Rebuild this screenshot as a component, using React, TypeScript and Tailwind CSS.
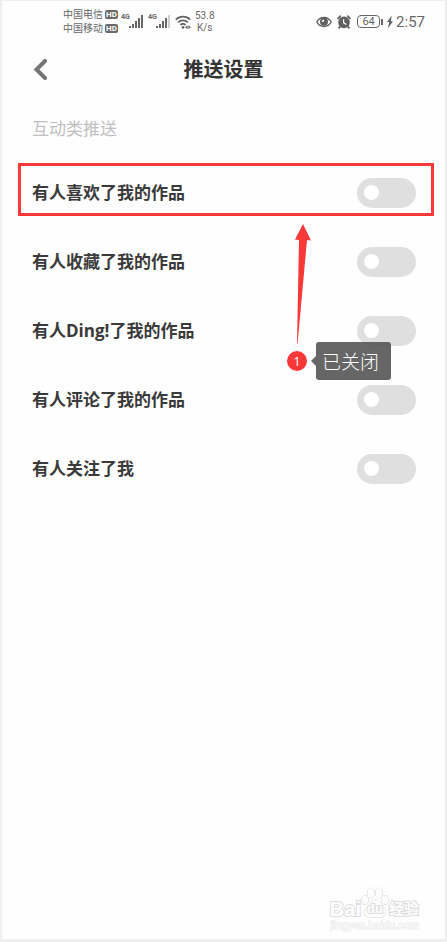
import { useState } from "react";

type PushSetting = {
  id: string;
  label: string;
};

const SETTINGS: PushSetting[] = [
  { id: "liked", label: "有人喜欢了我的作品" },
  { id: "collected", label: "有人收藏了我的作品" },
  { id: "ding", label: "有人Ding!了我的作品" },
  { id: "commented", label: "有人评论了我的作品" },
  { id: "followed", label: "有人关注了我" },
];

function Carrier({ name }: { name: string }) {
  return (
    <div className="flex items-center gap-0.5">
      <span>{name}</span>
      <span className="flex h-[9px] w-[13px] items-center justify-center rounded-xs bg-[#6a6a6a] text-[8px] leading-none font-bold text-white">
        HD
      </span>
    </div>
  );
}

function Signal({ full }: { full: boolean }) {
  return (
    <div className="flex">
      <span className="w-2 text-[7px] leading-1 font-bold">4G</span>
      <svg className="h-3.5 w-4" viewBox="0 0 16 14" fill="#666666" aria-hidden="true">
        <rect x="0" y="11" width="2" height="2" />
        <rect x="3" y="9" width="2" height="4" />
        <rect x="6" y="6" width="2" height="7" />
        <rect x="9" y="3" width="2" height="10" />
        <rect x="12" y="0" width="2" height="13" opacity={full ? 1 : 0.3} />
      </svg>
    </div>
  );
}

function WifiIcon() {
  return (
    <svg className="h-3.5 w-4" viewBox="0 0 16 14" fill="none" stroke="#666666" strokeWidth="1.8" aria-hidden="true">
      <path d="M0.8 4.6a10.2 10.2 0 0 1 14.4 0" />
      <path d="M3.1 7.4a7 7 0 0 1 9.8 0" />
      <path d="M5.4 10a3.8 3.8 0 0 1 5.2 0" />
      <circle cx="8" cy="12.4" r="1.4" fill="#666666" stroke="none" />
      <path d="M10 12.2l2.6-2v4zM16 12.2l-2.6-2v4z" fill="#666666" stroke="none" />
    </svg>
  );
}

function EyeIcon() {
  return (
    <svg className="h-3 w-4" viewBox="0 0 16 12" fill="none" aria-hidden="true">
      <path d="M0.8 6C4 0 12 0 15.2 6 12 12 4 12 0.8 6Z" stroke="#5f5f5f" strokeWidth="1.4" />
      <circle cx="8" cy="5.8" r="4" fill="#5f5f5f" />
      <path d="M8 3.6a2.2 2.2 0 0 0-2.2 2.2H8Z" fill="#ffffff" />
    </svg>
  );
}

function AlarmIcon() {
  return (
    <svg className="h-3.5 w-3.5" viewBox="0 0 14 14" fill="none" aria-hidden="true">
      <circle cx="7" cy="7.4" r="5.8" fill="#5f5f5f" />
      <path d="M0.6 3.8 3.8 0.7M13.4 3.8 10.2 0.7M3.2 11.6 1.5 13.4M10.8 11.6l1.7 1.8" stroke="#5f5f5f" strokeWidth="1.8" />
      <path d="M6.6 4.2v3.6l2.8 1.6" stroke="#ffffff" strokeWidth="1.2" />
    </svg>
  );
}

function StatusBar() {
  return (
    <div className="flex h-[41px] items-center justify-between pr-5 pl-[61px] text-[#666666]">
      <div className="flex items-center">
        <div className="w-[58px] text-[10px] leading-[14px]">
          <Carrier name="中国电信" />
          <Carrier name="中国移动" />
        </div>
        <div className="flex gap-[3px]">
          <Signal full />
          <Signal full={false} />
        </div>
        <div className="ml-[3px]">
          <WifiIcon />
        </div>
        <div className="ml-1 text-center text-[10px] leading-3">
          <div>53.8</div>
          <div>K/s</div>
        </div>
      </div>
      <div className="flex items-center">
        <EyeIcon />
        <span className="ml-[5px]">
          <AlarmIcon />
        </span>
        <span className="ml-1.5 flex h-[13px] w-[23px] items-center justify-center rounded border border-[#666666] text-[11px] leading-none">
          64
        </span>
        <span className="ml-px h-1.5 w-0.5 bg-[#666666]" />
        <svg className="ml-1 h-3.5 w-1.5" viewBox="0 0 6 14" fill="#5f5f5f" aria-hidden="true">
          <path d="M4.8 0.5 0 7h2.2L0.8 13.5 6 6.2H3.8Z" />
        </svg>
        <span className="ml-[3px] text-[15px] leading-5">2:57</span>
      </div>
    </div>
  );
}

function Header() {
  return (
    <header className="flex h-14 items-center justify-between px-[30px]">
      <button type="button" aria-label="返回" className="flex h-8 w-6 items-center">
        <svg className="h-[22px] w-[19px]" viewBox="0 0 19 22" fill="none" aria-hidden="true">
          <path d="M13 2 4.5 10.5l8.5 8.5" stroke="#757575" strokeWidth="4" strokeLinecap="round" />
        </svg>
      </button>
      <h1 className="text-[20px] leading-7 font-bold text-[#333333]">推送设置</h1>
      <span className="w-6" />
    </header>
  );
}

function Callout() {
  return (
    <>
      <div className="pointer-events-none absolute top-[5px] right-[11px] left-4 h-[53px] border-3 border-[#fb3838]" />
      <svg
        className="pointer-events-none absolute top-[66px] right-[134px] h-[120px] w-4"
        viewBox="0 0 16 120"
        fill="#fb3838"
        aria-hidden="true"
      >
        <path d="M8 0 16 16.5 12 16 2.6 119.5H2L4 16 0 15.5Z" />
      </svg>
      <div className="pointer-events-none absolute top-[184px] right-[54px] z-10 flex items-center">
        <span className="flex h-5 w-5 items-center justify-center rounded-full bg-[#fb3838] font-['Open_Sans',sans-serif] text-[13px] leading-none text-white">
          1
        </span>
        <svg className="ml-1 h-2.5 w-[5px]" viewBox="0 0 5 10" fill="#666666" aria-hidden="true">
          <path d="M5 0v10L0 5Z" />
        </svg>
        <span className="rounded-[3px] bg-[#555555]/90 py-[5px] pr-3 pl-1.5 font-['Noto_Sans_CJK_SC',sans-serif] text-[19px] leading-7 font-light text-white">
          已关闭
        </span>
      </div>
    </>
  );
}

function SettingRow({ setting, highlighted }: { setting: PushSetting; highlighted: boolean }) {
  const [enabled, setEnabled] = useState(false);

  return (
    <li className="relative flex h-[69px] items-center justify-between pr-[29px] pl-[30px]">
      <label
        htmlFor={setting.id}
        className="font-['Open_Sans','Noto_Sans_CJK_SC',sans-serif] text-[17px] leading-6 font-bold text-[#3a3a3a]"
      >
        {setting.label}
      </label>
      <input
        id={setting.id}
        type="checkbox"
        role="switch"
        checked={enabled}
        onChange={(event) => setEnabled(event.target.checked)}
        className="flex h-[30px] w-[59px] appearance-none items-center rounded-full bg-[#dfdfdf] px-[7px] before:h-[15px] before:w-[15px] before:rounded-full before:bg-white checked:justify-end checked:bg-[#4cd964]"
      />
      {highlighted && <Callout />}
    </li>
  );
}

function Watermark() {
  return (
    <div className="mr-[26px] mb-2 flex flex-col items-end self-end font-['Liberation_Sans','Noto_Sans_CJK_SC',sans-serif] text-[#fdfdfd] [-webkit-text-stroke:2px_#dedede] [paint-order:stroke_fill]">
      <div className="flex items-end">
        <span className="text-[20px] leading-5 font-bold">Bai</span>
        <span className="relative flex h-8 w-7 items-end justify-center">
          <svg className="absolute inset-0 h-8 w-7" viewBox="0 0 28 32" fill="#fdfdfd" stroke="#d2d2d2" aria-hidden="true">
            <path d="M14 13c-4 0-5 4-8 7-4 3-4 10 3 10h10c7 0 7-7 3-10-3-3-4-7-8-7Z" />
            <ellipse cx="10" cy="6" rx="3.6" ry="4.9" />
            <ellipse cx="18" cy="6" rx="3.6" ry="4.9" />
            <ellipse cx="4" cy="13" rx="3.2" ry="4.4" />
            <ellipse cx="24" cy="13" rx="3.2" ry="4.4" />
          </svg>
          <span className="relative text-[13px] leading-5 font-bold">du</span>
        </span>
        <span className="text-[15px] leading-5 font-bold">经验</span>
      </div>
      <span className="text-[11px] leading-3 [-webkit-text-stroke:1px_#e6e6e6]">jingyan.baidu.com</span>
    </div>
  );
}

export default function App() {
  return (
    <div className="flex min-h-screen flex-col border-x-2 border-t border-b-3 border-[#efefef] bg-[#fefefe] font-[Roboto,'Noto_Sans_CJK_SC',sans-serif]">
      <StatusBar />
      <Header />
      <main className="flex flex-1 flex-col">
        <h2 className="px-[30px] pt-[19px] pb-[17px] text-[17px] leading-6 text-[#c0c0c0]">互动类推送</h2>
        <ul>
          {SETTINGS.map((setting, index) => (
            <SettingRow key={setting.id} setting={setting} highlighted={index === 0} />
          ))}
        </ul>
        <div className="mt-auto flex flex-col">
          <Watermark />
        </div>
      </main>
    </div>
  );
}
